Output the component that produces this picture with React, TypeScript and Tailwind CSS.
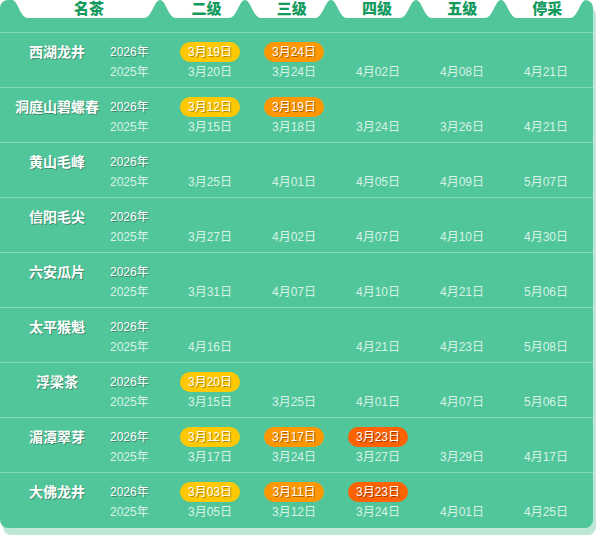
import React from "react";

type Tea = {
  name: string;
  now: string[];
  last: string[];
};

const teas: Tea[] = [
  { name: "西湖龙井", now: ["3月19日", "3月24日"], last: ["3月20日", "3月24日", "4月02日", "4月08日", "4月21日"] },
  { name: "洞庭山碧螺春", now: ["3月12日", "3月19日"], last: ["3月15日", "3月18日", "3月24日", "3月26日", "4月21日"] },
  { name: "黄山毛峰", now: [], last: ["3月25日", "4月01日", "4月05日", "4月09日", "5月07日"] },
  { name: "信阳毛尖", now: [], last: ["3月27日", "4月02日", "4月07日", "4月10日", "4月30日"] },
  { name: "六安瓜片", now: [], last: ["3月31日", "4月07日", "4月10日", "4月21日", "5月06日"] },
  { name: "太平猴魁", now: [], last: ["4月16日", "", "4月21日", "4月23日", "5月08日"] },
  { name: "浮梁茶", now: ["3月20日"], last: ["3月15日", "3月25日", "4月01日", "4月07日", "5月06日"] },
  { name: "湄潭翠芽", now: ["3月12日", "3月17日", "3月23日"], last: ["3月17日", "3月24日", "3月27日", "3月29日", "4月17日"] },
  { name: "大佛龙井", now: ["3月03日", "3月11日", "3月23日"], last: ["3月05日", "3月12日", "3月24日", "4月01日", "4月25日"] },
];

const headers = ["二级", "三级", "四级", "五级", "停采"];

const pillStyles = [
  "bg-[#ffc800] [text-shadow:1px_1px_0_#b78a00]",
  "bg-[#ff9700] [text-shadow:1px_1px_0_#b35f00]",
  "bg-[#ff6200] [text-shadow:1px_1px_0_#a83a00]",
];

// tab edges along the top wave
const peaks = [12, 160, 245, 331, 416, 501, 586];

function tabPath(a: number, b: number) {
  return `M${a} 0 C${a + 6} 0 ${a + 8} 18 ${a + 16} 18 L${b - 16} 18 C${b - 8} 18 ${b - 6} 0 ${b} 0 Z`;
}

function Row({ tea }: { tea: Tea }) {
  return (
    <div className="flex h-[55px] border-t border-[#85d8b7] pt-[9px]">
      <div className="w-[110px] pl-[4px] text-center">
        <div className="flex h-[20px] items-center justify-center text-[14px] font-bold text-white [text-shadow:1px_1px_0_#3d8f6c]">
          {tea.name}
        </div>
      </div>
      <div className="w-[58px] text-[12px]">
        <div className="flex h-[20px] items-center text-white [text-shadow:1px_1px_0_#3d8f6c]">2026年</div>
        <div className="flex h-[20px] items-center text-[#d8f2e7]">2025年</div>
      </div>
      {tea.last.map((d, i) => (
        <div key={i} className="flex w-[84px] flex-col items-center text-[12px]">
          <div className="flex h-[20px] items-center">
            {tea.now[i] ? (
              <span className={`flex h-[20px] w-[60px] items-center justify-center rounded-full text-white ${pillStyles[i]}`}>
                {tea.now[i]}
              </span>
            ) : null}
          </div>
          <div className="flex h-[20px] items-center text-[#d8f2e7]">{d}</div>
        </div>
      ))}
    </div>
  );
}

export default function App() {
  return (
    <div className="h-[535px] w-[596px] bg-white font-['Liberation_Sans','Noto_Sans_CJK_SC',sans-serif]">
      <div className="w-[593px] overflow-hidden rounded-[8px] bg-[#52c69b] pb-[1px] shadow-[3px_7px_0_#bfe7d6]">
        <div className="relative h-[32px]">
          <svg className="absolute left-0 top-0" width="593" height="20" viewBox="0 0 593 20">
            {peaks.slice(0, -1).map((a, i) => (
              <path key={i} d={tabPath(a, peaks[i + 1])} fill="#ffffff" />
            ))}
          </svg>
          <div className="relative flex h-[19px] items-center text-[15px] font-black text-[#139b5e]">
            <div className="w-[160px] pl-[18px] text-center">名茶</div>
            {headers.map((h) => (
              <div key={h} className="w-[85.2px] pl-[8px] text-center">
                {h}
              </div>
            ))}
          </div>
        </div>
        {teas.map((t) => (
          <Row key={t.name} tea={t} />
        ))}
      </div>
    </div>
  );
}
